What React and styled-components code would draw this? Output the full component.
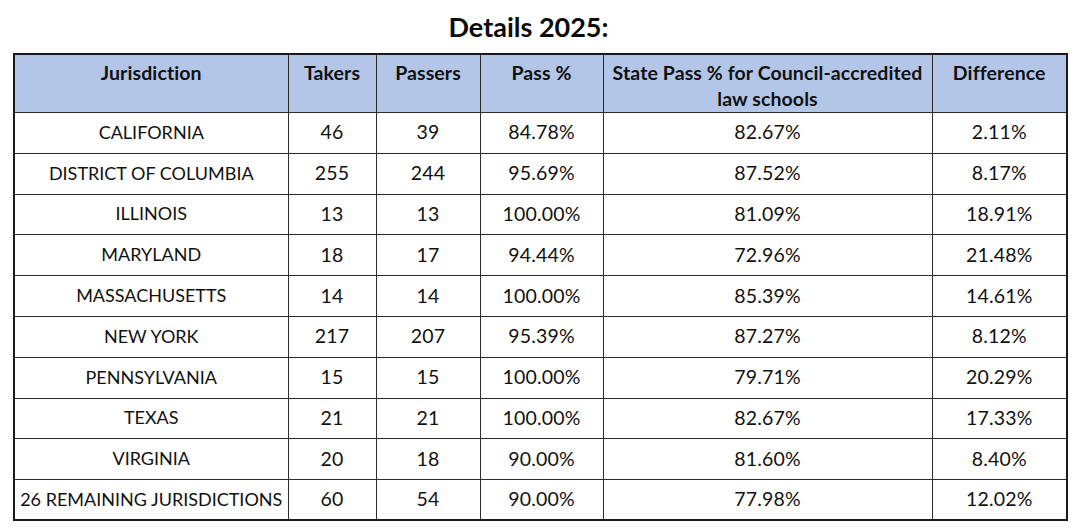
import React from "react";
import styled, { createGlobalStyle } from "styled-components";

const GlobalStyle = createGlobalStyle`
  body {
    margin: 0;
    background: #ffffff;
    font-family: Lato, "Liberation Sans", sans-serif;
    color: #111;
  }
`;

const Page = styled.div`
  width: 1080px;
  height: 530px;
  padding: 10px 0 0 13px;
  box-sizing: border-box;
`;

const Title = styled.h1`
  margin: 0 0 9px 0;
  width: 1053px;
  padding-right: 22px;
  box-sizing: border-box;
  text-align: center;
  font-size: 27px;
  line-height: 34px;
  font-weight: 700;
  color: #0a0a0a;
`;

const Table = styled.table`
  width: 1053px;
  table-layout: fixed;
  border-collapse: collapse;
  border: 2px solid #1a1a1a;
`;

const HeadCell = styled.th`
  width: ${({ $w }) => $w}px;
  height: 58px;
  padding: 5px 4px 0;
  box-sizing: border-box;
  background: #b4c6e7;
  border: 1px solid #2a2a2a;
  vertical-align: top;
  text-align: center;
  font-size: 19.5px;
  line-height: 26px;
  font-weight: 700;
  letter-spacing: 0.1px;
  color: #111;
`;

const Cell = styled.td`
  height: 40.8px;
  box-sizing: border-box;
  padding: 0 0 2px;
  border: 1px solid #2a2a2a;
  text-align: center;
  vertical-align: middle;
  font-size: ${({ $name }) => ($name ? "18px" : "19.5px")};
  letter-spacing: ${({ $name }) => ($name ? "0" : "0.2px")};
  color: #111;
  white-space: nowrap;
`;

const columns = [
  { label: "Jurisdiction", w: 274 },
  { label: "Takers", w: 88 },
  { label: "Passers", w: 104 },
  { label: "Pass %", w: 123 },
  { label: "State Pass % for Council-accredited law schools", w: 329 },
  { label: "Difference", w: 135 },
];

const rows = [
  ["CALIFORNIA", "46", "39", "84.78%", "82.67%", "2.11%"],
  ["DISTRICT OF COLUMBIA", "255", "244", "95.69%", "87.52%", "8.17%"],
  ["ILLINOIS", "13", "13", "100.00%", "81.09%", "18.91%"],
  ["MARYLAND", "18", "17", "94.44%", "72.96%", "21.48%"],
  ["MASSACHUSETTS", "14", "14", "100.00%", "85.39%", "14.61%"],
  ["NEW YORK", "217", "207", "95.39%", "87.27%", "8.12%"],
  ["PENNSYLVANIA", "15", "15", "100.00%", "79.71%", "20.29%"],
  ["TEXAS", "21", "21", "100.00%", "82.67%", "17.33%"],
  ["VIRGINIA", "20", "18", "90.00%", "81.60%", "8.40%"],
  ["26 REMAINING JURISDICTIONS", "60", "54", "90.00%", "77.98%", "12.02%"],
];

const App = () => {
  return (
    <Page>
      <GlobalStyle />
      <Title>Details 2025:</Title>
      <Table>
        <thead>
          <tr>
            {columns.map((c) => (
              <HeadCell key={c.label} $w={c.w}>
                {c.label}
              </HeadCell>
            ))}
          </tr>
        </thead>
        <tbody>
          {rows.map((r) => (
            <tr key={r[0]}>
              {r.map((v, i) => (
                <Cell key={i} $name={i === 0}>
                  {v}
                </Cell>
              ))}
            </tr>
          ))}
        </tbody>
      </Table>
    </Page>
  );
};

export default App;
